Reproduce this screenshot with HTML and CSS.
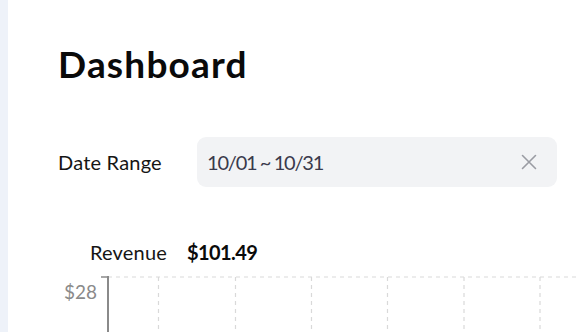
FILE: index.html
```html
<!DOCTYPE html>
<html>
<head>
<meta charset="utf-8">
<link rel="stylesheet" href="styles.css">
</head>
<body>
<div class="page">
  <div class="rail"></div>
  <main class="main">
    <h1 class="title">Dashboard</h1>
    <div class="date-row">
      <label class="date-label">Date Range</label>
      <div class="date-input">
        <span class="date-value">10/01 ~ 10/31</span>
        <svg class="clear-icon" width="16" height="16" viewBox="0 0 16 16"><path d="M1.5 1.5 L14.5 14.5 M14.5 1.5 L1.5 14.5" stroke="#9a9ca3" stroke-width="1.6" fill="none" stroke-linecap="round"/></svg>
      </div>
    </div>
    <div class="revenue-row">
      <span class="revenue-label">Revenue</span>
      <span class="revenue-value">$101.49</span>
    </div>
    <svg class="chart" width="520" height="68" viewBox="0 0 520 68">
      <g stroke="#d9d9d9" stroke-width="1.2" stroke-dasharray="4 4" fill="none">
        <line x1="50" y1="13" x2="520" y2="13"/>
        <line x1="100.5" y1="13" x2="100.5" y2="68"/>
        <line x1="177.5" y1="13" x2="177.5" y2="68"/>
        <line x1="253.5" y1="13" x2="253.5" y2="68"/>
        <line x1="329.5" y1="13" x2="329.5" y2="68"/>
        <line x1="406" y1="13" x2="406" y2="68"/>
        <line x1="482" y1="13" x2="482" y2="68"/>
      </g>
      <line x1="50" y1="12" x2="50" y2="68" stroke="#8a8a8a" stroke-width="2"/>
      <line x1="43" y1="13" x2="50" y2="13" stroke="#8a8a8a" stroke-width="1.5"/>
      <text class="tick" x="39" y="35" text-anchor="end">$28</text>
    </svg>
  </main>
</div>
</body>
</html>
```
FILE: styles.css
```css
html, body {
  margin: 0;
  padding: 0;
  background: #ffffff;
}
body {
  font-family: Lato, "Liberation Sans", sans-serif;
  color: #111111;
  overflow: hidden;
}
.page {
  display: flex;
  min-height: 332px;
}
.rail {
  width: 8px;
  flex: none;
  background: #eef2f9;
}
.main {
  flex: 1;
  padding: 40px 0 0 50px;
}
.title {
  margin: 0;
  font-size: 37px;
  line-height: 48px;
  font-weight: 700;
  color: #0a0a0a;
  letter-spacing: 1.2px;
}
.date-row {
  display: flex;
  align-items: center;
  margin-top: 49px;
  height: 50px;
}
.date-label {
  width: 139px;
  flex: none;
  font-size: 20px;
  color: #151515;
  letter-spacing: 0.2px;
}
.date-input {
  width: 360px;
  height: 50px;
  box-sizing: border-box;
  background: #f2f3f5;
  border-radius: 9px;
  display: flex;
  align-items: center;
  justify-content: space-between;
  padding: 0 20px 0 10px;
}
.date-value {
  font-size: 20px;
  color: #3a3a4c;
  letter-spacing: -1.2px;
  word-spacing: -0.5px;
}
.clear-icon {
  display: block;
}
.revenue-row {
  display: flex;
  align-items: center;
  gap: 20px;
  height: 24px;
  margin-top: 53px;
  margin-left: 32px;
}
.revenue-label {
  font-size: 20px;
  color: #151515;
  letter-spacing: 0.2px;
}
.revenue-value {
  font-size: 20px;
  font-weight: 700;
  color: #0a0a0a;
  letter-spacing: -0.6px;
}
.chart {
  display: block;
}
.tick {
  font-family: Lato, "Liberation Sans", sans-serif;
  font-size: 19px;
  fill: #8a8a8a;
}
```
